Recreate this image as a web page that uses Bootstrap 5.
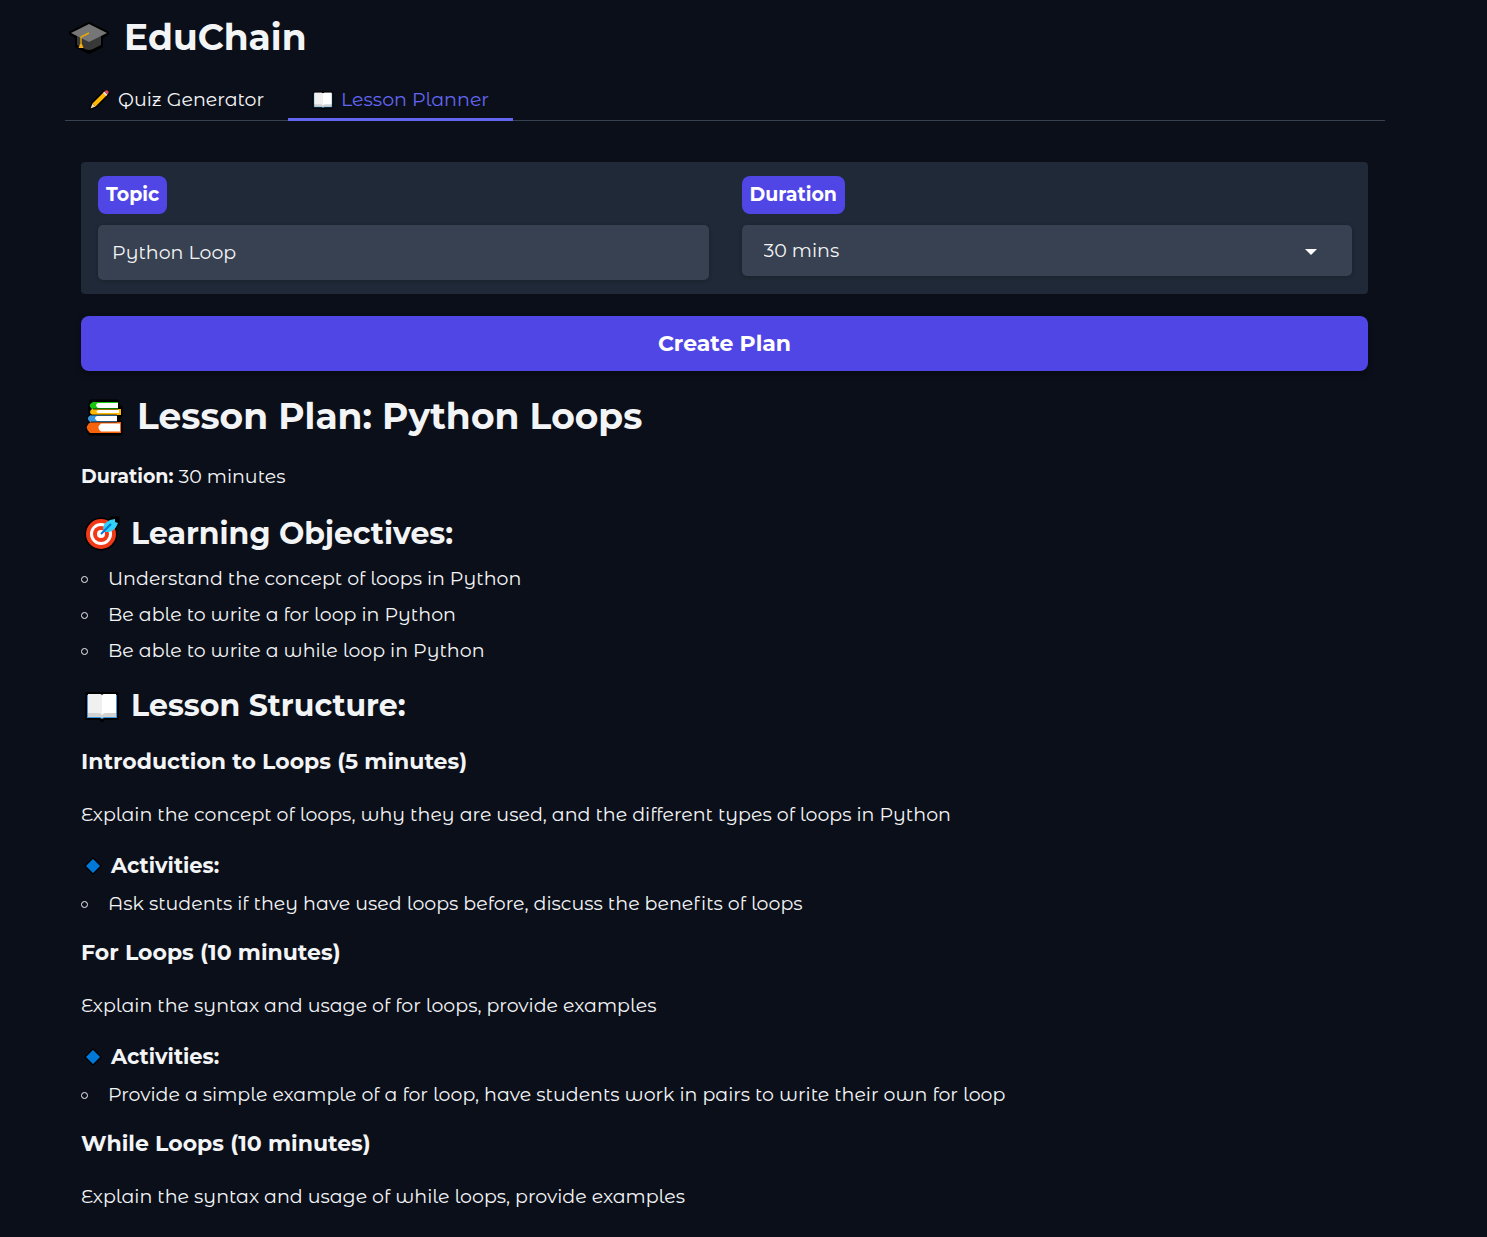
<!DOCTYPE html>
<html lang="en" data-bs-theme="dark">
<head>
<meta charset="utf-8">
<meta name="viewport" content="width=device-width, initial-scale=1">
<title>EduChain</title>
<link href="https://cdn.jsdelivr.net/npm/bootstrap@5.3.0/dist/css/bootstrap.min.css" rel="stylesheet">
<style>
  body { background: #0b0f19; color: #f3f4f6; font-family: "Montserrat Alternates", Montserrat, Inter, sans-serif; font-size: 19px; line-height: 28px; }
  .page-shell { padding: 15px 102px 24px 65px; }
  h1, h2, h3, h4, strong, .field-tag, .btn-plan, .form-panel .form-select { font-family: Montserrat, Inter, sans-serif; }
  h1, h2, h3, h4 { font-weight: 700; color: #f3f4f6; display: flex; align-items: center; }
  h1 { font-size: 36px; line-height: 44px; }
  h2 { font-size: 30px; line-height: 40px; }
  h3 { font-size: 22px; line-height: 28px; }
  h4 { font-size: 21px; line-height: 28px; }
  h1 svg { width: 40px; height: 40px; }
  h2 svg { width: 36px; height: 36px; }
  h4 svg { width: 18px; height: 18px; }
  .brand-title { gap: 15px; padding-left: 4px; margin: 0 0 20px; }
  .nav-tabs { border-bottom: 1px solid #374151; }
  .nav-tabs .nav-link { display: flex; align-items: center; gap: 7px; height: 42px; padding: 2px 24px 0; border: 0; border-bottom: 3px solid transparent; border-radius: 0; color: #f3f4f6; background: none; }
  .nav-tabs .nav-link.active { color: #6366f1; background: none; border-bottom-color: #6366f1; }
  .nav-tabs svg { width: 22px; height: 22px; }
  .tab-body { padding: 41px 17px 0 16px; }
  .form-panel { background: #1f2937; border-radius: 4px; padding: 14px 16px 14px 17px; margin-bottom: 22px; }
  .form-panel .row { --bs-gutter-x: 33px; }
  .field-tag { display: table; background: #4f46e5; color: #fff; font-weight: 700; line-height: 28px; padding: 5px 8px; border-radius: 8px; margin-bottom: 11px; }
  .form-panel .form-control, .form-panel .form-select { background: #374151; color: #f3f4f6; border: 0; border-radius: 5px; font-size: 19px; line-height: 28px; box-shadow: 0 1px 4px rgba(0,0,0,.18); }
  .form-panel .form-control { height: 55px; padding: 0 14px; }
  .form-panel .form-select { height: 51px; padding: 1px 50px 0 22px; background-image: none; }
  .caret-mark { position: absolute; right: 35px; top: 24px; width: 12px; height: 6px; pointer-events: none; }
  .btn-plan { background: #4f46e5; color: #fff; height: 55px; border: 0; border-radius: 8px; font-size: 22px; font-weight: 700; box-shadow: 0 3px 6px rgba(0,0,0,.35); }
  .btn-plan:hover { background: #4338ca; color: #fff; }
  .plan h1 { gap: 13px; padding-left: 3px; margin: 23px 0 25px; }
  .plan p { margin: 0 0 23px; }
  .plan h2 { gap: 11px; padding-left: 3px; margin: 0 0 7px; }
  .plan h3 { margin: 0 0 25px; }
  .plan h4 { gap: 9px; padding-left: 3px; margin: 0 0 6px; }
  .plan ul { list-style: none; padding: 0; margin: 0 0 17px; }
  .plan li { display: flex; align-items: center; gap: 20px; line-height: 36px; }
  .plan li::before { content: ""; width: 7px; height: 7px; border: 1px solid #f3f4f6; border-radius: 50%; flex: none; }
  .plan h2.structure { margin-bottom: 22px; }
</style>
<script src="https://cdn.jsdelivr.net/npm/bootstrap@5.3.0/dist/js/bootstrap.bundle.min.js"></script>
</head>
<body>
<svg width="0" height="0" class="position-absolute" aria-hidden="true">
  <symbol id="book" viewBox="0 0 36 36">
    <path d="M3 6h30v24H20l-2 2-2-2H3z" fill="#000" stroke="#000" stroke-width="4" stroke-linejoin="round"/>
    <path d="M3 7h30v23H20l-2 1-2-1H3z" fill="#3a96dd"/>
    <path d="M4 6h12l2 1 2-1h12v23H20l-2 1-2-1H4z" fill="#d2d2d2"/>
    <path d="M4 6h11q3 0 3 2v19q-1-2-4-2H4z" fill="#f0f0f0"/>
    <path d="M32 6H21q-3 0-3 2v19q1-2 4-2h10z" fill="#fff"/>
  </symbol>
  <symbol id="diamond" viewBox="0 0 18 18">
    <path d="M9 1l8 8-8 8-8-8z" fill="#0078d7" stroke="#000" stroke-width="1.2" stroke-linejoin="round"/>
  </symbol>
</svg>
<div class="container-fluid page-shell">
  <header>
    <h1 class="brand-title">
      <svg viewBox="0 0 40 40" aria-hidden="true">
        <path d="M20 7L2 16l6 4v9l12 6 12-6v-9l6-4z" fill="#000" stroke="#000" stroke-width="4" stroke-linejoin="round"/>
        <path d="M8 18v10l8 4q4 2 8 0l8-4V18L20 24z" fill="#383838"/>
        <path d="M20 7l18 9-18 9L2 16z" fill="#767676"/>
        <path d="M20 16l-8 4v9" fill="none" stroke="#e9a80c" stroke-width="1.4"/>
        <path d="M11 27h2l1.500 4h-5z" fill="#f8ac12"/>
      </svg>
      <span>EduChain</span>
    </h1>
  </header>
  <ul class="nav nav-tabs" role="tablist">
    <li class="nav-item" role="presentation"><button class="nav-link" type="button" role="tab" aria-selected="false">
      <svg viewBox="0 0 22 22" aria-hidden="true">
        <path d="M1 20l2-6L15 2q2-1 4 1t0 3L7 18z" fill="#000" stroke="#000" stroke-width="1.500"/>
        <path d="M1.500 19.500l2-5 3 3z" fill="#f6d7b0"/><path d="M3.500 14.500L15 3l3 3L6.500 17.500z" fill="#ffb900"/>
        <path d="M14 4l1.500-1.500 3 3L17 7z" fill="#ddd"/><path d="M15.500 2.500q2-2 3.500-.5t-.5 3.500z" fill="#e74856"/>
      </svg>
      <span>Quiz Generator</span></button></li>
    <li class="nav-item" role="presentation"><button class="nav-link active" type="button" role="tab" aria-selected="true" aria-controls="planner">
      <svg aria-hidden="true"><use href="#book"/></svg>
      <span>Lesson Planner</span></button></li>
  </ul>
  <main class="tab-body" id="planner">
    <form>
      <div class="form-panel">
        <div class="row">
          <div class="col-6">
            <label class="field-tag" for="topic">Topic</label>
            <input class="form-control" id="topic" type="text" value="Python Loop">
          </div>
          <div class="col-6">
            <label class="field-tag" for="duration">Duration</label>
            <div class="position-relative">
              <select class="form-select" id="duration"><option>30 mins</option></select>
              <svg class="caret-mark" viewBox="0 0 12 6" aria-hidden="true"><path d="M0 0h12L6 6z" fill="#fff"/></svg>
            </div>
          </div>
        </div>
      </div>
      <button class="btn btn-plan w-100" type="button">Create Plan</button>
    </form>
    <article class="plan">
      <h1>
        <svg viewBox="0 0 40 40" aria-hidden="true">
          <path d="M7 5h27v6h3v9l-2 2v4h2v12H6q-5-5 0-12-3-5 1-8-3-6 0-13z" fill="#000" stroke="#000" stroke-width="3" stroke-linejoin="round"/>
          <path d="M34 6H9q-6 3-1 7h26z" fill="#16c60c"/><path d="M34 7H14q-4 2 0 5h20z" fill="#fff"/>
          <path d="M37 13H8q-4 3 0 6h29z" fill="#ffb900"/><path d="M35 14H14q-3 2 0 3h21z" fill="#fff"/>
          <path d="M33 19H7q-6 3-1 7h27z" fill="#3a96dd"/><path d="M33 20H13q-4 2 0 5h20z" fill="#fff"/>
          <path d="M37 26H7q-8 5-1 11h31z" fill="#f7630c"/><path d="M36 27.500H17q-5 4 0 8h19z" fill="#fff"/>
          <path d="M9 13h25M7 19h26M7 26h26" stroke="#000" stroke-width=".8"/>
        </svg>
        <span>Lesson Plan: Python Loops</span>
      </h1>
      <p><strong>Duration:</strong> 30 minutes</p>
      <h2>
        <svg viewBox="0 0 36 36" aria-hidden="true">
          <circle cx="17" cy="18" r="16.500" fill="#000"/><path d="M22 8l6-6h6v7l-8 5z" fill="#000" stroke="#000" stroke-width="3"/>
          <circle cx="17" cy="18" r="15" fill="#f03a17"/><circle cx="17" cy="18" r="11" fill="#fff"/>
          <circle cx="17" cy="18" r="8" fill="#f03a17"/><circle cx="17" cy="18" r="4" fill="#fff"/>
          <path d="M19 13q0-6 7-9l5-1v3l3 1q-3 8-9 9h-4z" fill="#31d2f7"/>
          <path d="M17 18L27 8" stroke="#0078d7" stroke-width="2"/>
        </svg>
        <span>Learning Objectives:</span>
      </h2>
      <ul>
        <li>Understand the concept of loops in Python</li>
        <li>Be able to write a for loop in Python</li>
        <li>Be able to write a while loop in Python</li>
      </ul>
      <h2 class="structure"><svg aria-hidden="true"><use href="#book"/></svg><span>Lesson Structure:</span></h2>
      <h3>Introduction to Loops (5 minutes)</h3>
      <p>Explain the concept of loops, why they are used, and the different types of loops in Python</p>
      <h4><svg aria-hidden="true"><use href="#diamond"/></svg><span>Activities:</span></h4>
      <ul><li>Ask students if they have used loops before, discuss the benefits of loops</li></ul>
      <h3>For Loops (10 minutes)</h3>
      <p>Explain the syntax and usage of for loops, provide examples</p>
      <h4><svg aria-hidden="true"><use href="#diamond"/></svg><span>Activities:</span></h4>
      <ul><li>Provide a simple example of a for loop, have students work in pairs to write their own for loop</li></ul>
      <h3>While Loops (10 minutes)</h3>
      <p>Explain the syntax and usage of while loops, provide examples</p>
    </article>
  </main>
</div>
</body>
</html>
